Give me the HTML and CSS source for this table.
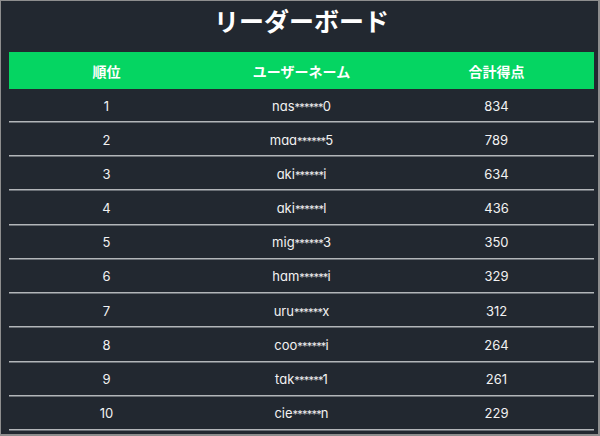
FILE: index.html
```html
<!DOCTYPE html>
<html lang="ja">
<head>
<meta charset="utf-8">
<title>リーダーボード</title>
<link rel="stylesheet" href="styles.css">
</head>
<body>
<div class="frame">
  <h1 class="title">リーダーボード</h1>
  <table class="board">
    <thead>
      <tr><th>順位</th><th>ユーザーネーム</th><th>合計得点</th></tr>
    </thead>
    <tbody>
      <tr><td>1</td><td>nas<span class="mask">******</span>0</td><td>834</td></tr>
      <tr><td>2</td><td>maa<span class="mask">******</span>5</td><td>789</td></tr>
      <tr><td>3</td><td>aki<span class="mask">******</span>i</td><td>634</td></tr>
      <tr><td>4</td><td>aki<span class="mask">******</span>l</td><td>436</td></tr>
      <tr><td>5</td><td>mig<span class="mask">******</span>3</td><td>350</td></tr>
      <tr><td>6</td><td>ham<span class="mask">******</span>i</td><td>329</td></tr>
      <tr><td>7</td><td>uru<span class="mask">******</span>x</td><td>312</td></tr>
      <tr><td>8</td><td>coo<span class="mask">******</span>i</td><td>264</td></tr>
      <tr><td>9</td><td>tak<span class="mask">******</span>1</td><td>261</td></tr>
      <tr><td>10</td><td>cie<span class="mask">******</span>n</td><td>229</td></tr>
    </tbody>
  </table>
</div>
</body>
</html>
```
FILE: styles.css
```css
html, body {
  margin: 0;
  padding: 0;
}
body {
  background: #222830;
  font-family: "Inter", "Noto Sans CJK JP", sans-serif;
  font-feature-settings: "cv11";
  color: #f2f2f2;
}
.frame {
  box-sizing: border-box;
  width: 600px;
  height: 436px;
  border-style: solid;
  border-color: #8e8e8e;
  border-width: 1px 2px 2px 1px;
  padding: 0 4px 0 8px;
  overflow: hidden;
}
.title {
  margin: 1px 0 0;
  font-family: "Noto Sans CJK JP", sans-serif;
  font-size: 25px;
  line-height: 36px;
  font-weight: 700;
  text-align: center;
  color: #ffffff;
}
.board {
  width: 100%;
  margin-top: 14px;
  border-collapse: collapse;
  table-layout: fixed;
}
.board th {
  background: #05d562;
  color: #ffffff;
  font-family: "Noto Sans CJK JP", sans-serif;
  font-size: 14px;
  font-weight: 700;
  height: 37px;
  padding: 0;
  text-align: center;
}
.board td {
  height: 33.22px;
  padding: 0;
  text-align: center;
  font-size: 13px;
  border-bottom: 1px solid #6a6f75;
  box-shadow: inset 0 -1px 0 #b3b6b9;
}
.board tbody tr:first-child td {
  height: 33px;
}
.mask {
  font-size: 11px;
  letter-spacing: -0.8px;
}
```
